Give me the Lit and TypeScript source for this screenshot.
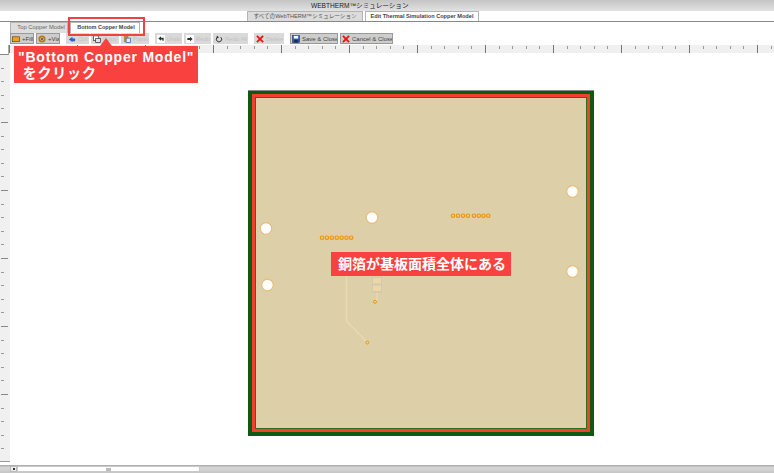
import { LitElement, css, html, svg } from "lit";
import { customElement } from "lit/decorators.js";

type Tool = { label: string; width: number; icon: string; off?: boolean };

const groups: Tool[][] = [
    [
        { label: "+Fill", width: 24, icon: "fill" },
        { label: "+Via", width: 24, icon: "via" },
    ],
    [
        { label: "Cut", width: 23, icon: "cut", off: true },
        { label: "Copy", width: 28, icon: "copy", off: true },
        { label: "Paste", width: 28, icon: "paste", off: true },
    ],
    [
        { label: "Undo", width: 27, icon: "undo", off: true },
        { label: "Redo", width: 27, icon: "redo", off: true },
        { label: "Redo All", width: 35, icon: "redoall", off: true },
    ],
    [{ label: "Delete", width: 30, icon: "x", off: true }],
    [
        { label: "Save & Close", width: 48, icon: "save" },
        { label: "Cancel & Close", width: 53, icon: "x" },
    ],
];

const icons: Record<string, unknown> = {
    fill: svg`<rect x="0.5" y="2" width="8" height="5.5" fill="#f0a020" stroke="#6b4a10" stroke-width="0.8"/>`,
    via: svg`<circle cx="4.5" cy="4.5" r="3" fill="none" stroke="#b8780f" stroke-width="2"/><circle cx="4.5" cy="4.5" r="1" fill="#4a3208"/>`,
    cut: svg`<path d="M1 5 L5 2 V4 H8 V7 H5 V8 Z" fill="#2a62c8"/>`,
    copy: svg`<rect x="0.5" y="1" width="6" height="5" fill="#fff" stroke="#333" stroke-width="0.8"/><rect x="3" y="4" width="5.5" height="4.5" fill="#e4e4f0" stroke="#333" stroke-width="0.8"/>`,
    paste: svg`<rect x="1" y="1" width="5" height="7" fill="#c88a28"/><rect x="3.5" y="3.5" width="5" height="5" fill="#e8ecfa" stroke="#3058b8" stroke-width="0.8"/>`,
    undo: svg`<rect width="9" height="9" fill="#fff"/><path d="M1.5 4 L4.5 1.5 V3 H7.5 V6.5 H6 V5 H4.5 V6.5 Z" fill="#1f3a2a"/>`,
    redo: svg`<rect width="9" height="9" fill="#fff"/><path d="M7.5 4.5 L4.5 2 V3.5 H1.5 V5.5 H4.5 V7 Z" fill="#1f3a2a"/>`,
    redoall: svg`<path d="M2.5 2.5 A3 3 0 1 0 6.5 2.5" fill="none" stroke="#222" stroke-width="1"/><path d="M2 0.8 L4.5 2.6 L2 4 Z" fill="#222"/>`,
    x: svg`<path d="M1 1 L8 8 M8 1 L1 8" stroke="#f01010" stroke-width="2"/>`,
    save: svg`<rect x="0.5" y="0.5" width="8" height="8" fill="#2858b8" stroke="#16306c" stroke-width="0.6"/><rect x="2" y="1" width="5" height="3" fill="#fff"/><rect x="2.5" y="5.5" width="4" height="3" fill="#1a2a50"/>`,
};

// via rows read off the board, page coordinates
const viaRowLeft = [322, 326.9, 331.8, 336.7, 341.6, 346.5, 351.2];
const viaRowRight = [453, 458, 463, 468, 474, 478.8, 483.5, 488.3];
const holes = [
    [266, 228.5],
    [372, 217.5],
    [267.5, 285],
    [572.5, 191.5],
    [572.5, 271.5],
];

@customElement("app-root")
export class AppRoot extends LitElement {
    private renderTool(t: Tool) {
        return html`
            <div class="tool ${t.off ? "off" : ""}" style="width:${t.width}px">
                <svg class="ico" viewBox="0 0 9 9">${icons[t.icon]}</svg>
                <span>${t.label}</span>
            </div>
        `;
    }

    protected override render() {
        return html`
            <div class="title">WEBTHERM™シミュレーション</div>
            <div class="main-tabs">
                <div class="mtab back">すべてのWebTHERM™シミュレーション</div>
                <div class="mtab front">Edit Thermal Simulation Copper Model</div>
            </div>
            <div class="sub-tabs">
                <div class="stab back">Top Copper Model</div>
                <div class="stab front">Bottom Copper Model</div>
            </div>
            <div class="toolbar">
                ${groups.map(g => html`<div class="group">${g.map(t => this.renderTool(t))}</div>`)}
            </div>
            <div class="ruler-top"><div class="corner"></div><div class="hticks"></div></div>
            <div class="body">
                <div class="ruler-left"></div>
                <div class="canvas">
                    <div class="board">
                        <div class="board-red">
                            <div class="board-tan">
                                <svg class="copper" viewBox="256 98 330 330">
                                    <path d="M346.5 276 V321 L367 342" fill="none" stroke="#edd9ae" stroke-width="1.3"/>
                                    <path d="M377 291 V298 L375.5 302" fill="none" stroke="#edd9ae" stroke-width="1.3"/>
                                    <rect x="372" y="277" width="10" height="16" fill="#d3c9ae"/>
                                    <rect x="373" y="278" width="8" height="5.5" fill="#eed6a8"/>
                                    <rect x="373" y="285.5" width="8" height="5.5" fill="#eed6a8"/>
                                    ${holes.map(([x, y]) => svg`<circle cx=${x} cy=${y} r="5.8" fill="#fff" stroke="#e8bd78" stroke-width="1.2"/>`)}
                                    ${viaRowLeft.map(x => svg`<circle class="via" cx=${x} cy="237.7" r="1.7"/>`)}
                                    ${viaRowRight.map(x => svg`<circle class="via" cx=${x} cy="215.7" r="1.7"/>`)}
                                    <circle class="via thin" cx="375" cy="301.8" r="1.5"/>
                                    <circle class="via thin" cx="367.3" cy="342.5" r="1.5"/>
                                </svg>
                            </div>
                        </div>
                    </div>
                </div>
            </div>
            <div class="scroll">
                <div class="arrow"></div>
                <div class="thumb"><span></span></div>
            </div>

            <div class="highlight"></div>
            <div class="tail"></div>
            <div class="callout first">"Bottom Copper Model"<br />&nbsp;をクリック</div>
            <div class="callout second">銅箔が基板面積全体にある</div>
        `;
    }

    static styles = css`
        :host {
            display: flex;
            flex-direction: column;
            position: relative;
            width: 774px;
            height: 473px;
            overflow: hidden;
            background: #fff;
            font-family: "Liberation Sans", "Noto Sans CJK JP", sans-serif;
            color: #333;
        }

        .title {
            height: 11px;
            line-height: 11px;
            flex: none;
            padding-left: 311px;
            font-size: 6.6px;
            color: #222;
            background: linear-gradient(#c4c4c4, #e2e2e2);
        }

        .main-tabs {
            height: 11px;
            flex: none;
            display: flex;
            gap: 2px;
            padding-left: 247px;
            box-sizing: border-box;
            border-bottom: 1px solid #888;
        }

        .mtab {
            height: 10px;
            line-height: 9px;
            text-align: center;
            font-size: 5.6px;
            box-sizing: border-box;
            border: 1px solid #b4b4b4;
            border-bottom: none;
            white-space: nowrap;
        }

        .mtab.back {
            width: 116px;
            background: #dcdcdc;
            color: #555;
        }

        .mtab.front {
            width: 114px;
            background: #fff;
            font-weight: bold;
            color: #444;
        }

        .sub-tabs {
            height: 11px;
            flex: none;
            display: flex;
            gap: 2px;
            padding-left: 10px;
            box-sizing: border-box;
        }

        .stab {
            height: 11px;
            line-height: 9px;
            text-align: center;
            font-size: 5.5px;
            box-sizing: border-box;
            border: 1px solid #b4b4b4;
            border-bottom: none;
            white-space: nowrap;
        }

        .stab.back {
            width: 58px;
            background: #dedede;
            color: #666;
            padding-left: 4px;
            font-size: 5.8px;
        }

        .stab.front {
            width: 70px;
            background: #fff;
            font-weight: bold;
            color: #444;
            padding-left: 2px;
        }

        .toolbar {
            height: 12px;
            flex: none;
            display: flex;
            gap: 6px;
            padding-left: 10px;
        }

        .group {
            display: flex;
            gap: 2px;
        }

        .tool {
            height: 11px;
            box-sizing: border-box;
            display: flex;
            align-items: center;
            gap: 2px;
            padding-left: 1px;
            font-size: 6px;
            color: #444;
            white-space: nowrap;
            overflow: hidden;
            background: #cdcdcd;
            border: 1px solid #999;
        }

        .tool.off {
            background: #d9d9d9;
            border-color: #d9d9d9;
            color: #c2c2c2;
        }

        .ico {
            width: 8px;
            height: 8px;
            flex: none;
        }

        .ruler-top {
            height: 8px;
            flex: none;
            display: flex;
        }

        .corner {
            width: 9px;
            height: 10px;
            flex: none;
            background: #fff;
            border-right: 1px solid #aaa;
            border-bottom: 1px solid #888;
            box-sizing: border-box;
            position: relative;
            z-index: 1;
        }

        .hticks {
            flex: 1;
            background-color: #f0f0f0;
            background-image:
                repeating-linear-gradient(90deg, #777 0 1px, transparent 1px 68px),
                repeating-linear-gradient(90deg, #999 0 1px, transparent 1px 13.6px);
            background-size: 100% 8px, 100% 3px;
            background-position: 0 0, 0 1px;
            background-repeat: no-repeat;
        }

        .body {
            flex: 1;
            display: flex;
            min-height: 0;
        }

        .ruler-left {
            width: 10px;
            flex: none;
            height: 409px;
            background-color: #f0f0f0;
            background-image:
                repeating-linear-gradient(180deg, #888 0 1px, transparent 1px 68px),
                repeating-linear-gradient(180deg, #999 0 1px, transparent 1px 13.6px);
            background-size: 7px 100%, 3px 100%;
            background-position: 1px 1px, 1px 1px;
            background-repeat: no-repeat;
            border-bottom: 1px solid #999;
            box-sizing: border-box;
        }

        .canvas {
            flex: 1;
            background: #fff;
            padding: 38px 0 0 238px;
        }

        .board {
            width: 346px;
            height: 345px;
            box-sizing: border-box;
            border: 4px solid #0d5a12;
            border-top-width: 3px;
            box-shadow: 0 -1px 0 #8a8a8a;
        }

        .board-red {
            height: 100%;
            box-sizing: border-box;
            border: 3px solid #f0412f;
        }

        .board-tan {
            height: 100%;
            box-sizing: border-box;
            border: 1px solid #2f6b22;
            background: #ddd0a8;
        }

        .copper {
            display: block;
            width: 100%;
            height: 100%;
        }

        .via {
            fill: #f0cf8c;
            stroke: #ea960f;
            stroke-width: 1.2;
        }

        .via.thin {
            stroke-width: 1;
            fill: #e6d4a6;
        }

        .scroll {
            height: 8px;
            flex: none;
            display: flex;
            padding: 1px 0 0 10px;
            box-sizing: border-box;
            background: linear-gradient(#a8a8a8, #d8d8d8 35%, #c6c6c6);
        }

        .arrow {
            width: 7px;
            height: 6px;
            background: #eee;
            border: 1px solid #bbb;
            box-sizing: border-box;
            position: relative;
        }

        .arrow::after {
            content: "";
            position: absolute;
            left: 1.5px;
            top: 1px;
            width: 2px;
            height: 2px;
            background: #333;
        }

        .thumb {
            width: 183px;
            height: 6px;
            background: #fff;
            border: 1px solid #c8c8c8;
            box-sizing: border-box;
            display: flex;
            align-items: center;
            justify-content: center;
        }

        .thumb span {
            width: 5px;
            height: 3px;
            background: #bbb;
        }

        .highlight {
            position: absolute;
            left: 68px;
            top: 17px;
            width: 77px;
            height: 19px;
            box-sizing: border-box;
            border: 2px solid #f4403f;
        }

        .tail {
            position: absolute;
            left: 100px;
            top: 38px;
            width: 0;
            height: 0;
            border-left: 6px solid transparent;
            border-right: 6px solid transparent;
            border-bottom: 8px solid #f9423f;
        }

        .callout {
            position: absolute;
            background: #f9423f;
            color: #fff;
            font-weight: bold;
            font-size: 14px;
            line-height: 16px;
            box-sizing: border-box;
            white-space: nowrap;
        }

        .first {
            left: 14px;
            top: 46px;
            width: 184px;
            height: 37px;
            padding: 3px 0 0 4px;
            letter-spacing: 0.8px;
        }

        .second {
            left: 331px;
            top: 252px;
            width: 180px;
            height: 24px;
            padding: 4px 0 0 7px;
        }
    `;
}
